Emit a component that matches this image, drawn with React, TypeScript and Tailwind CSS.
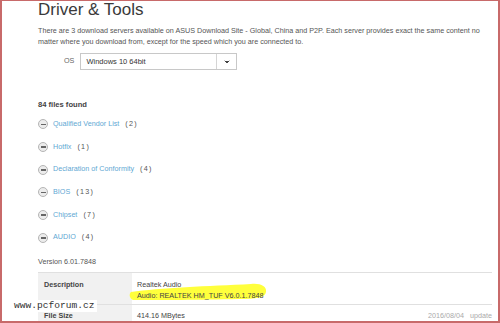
import { ChevronDown } from 'lucide-react';

const categories = [
  { name: 'Qualified Vendor List', count: 2 },
  { name: 'Hotfix', count: 1 },
  { name: 'Declaration of Conformity', count: 4 },
  { name: 'BIOS', count: 13 },
  { name: 'Chipset', count: 7 },
  { name: 'AUDIO', count: 4 },
];

function MinusCircle() {
  return (
    <span className="flex h-[10px] w-[10px] shrink-0 items-center justify-center rounded-full border border-[#b5b5b5] bg-[#ececec]">
      <span className="h-[1.5px] w-[5px] bg-[#666]" />
    </span>
  );
}

export default function App() {
  return (
    <div
      className="relative h-[323px] w-[500px] overflow-hidden border-t border-l-2 border-r-2 border-b-2 border-[#c86a6a] bg-white text-[#555]"
      style={{ fontFamily: '"Liberation Sans", Arial, sans-serif' }}
    >
      <div className="pl-[36px] pr-[6px]">
        {/* Heading */}
        <h1 className="mt-[-2px] text-[17px] leading-[22px] text-[#3a3a3a]">Driver &amp; Tools</h1>
        <p className="mt-[4px] text-[7.2px] leading-[11px] text-[#555]">
          There are 3 download servers available on ASUS Download Site - Global, China and P2P. Each server provides exact the same content no matter where you download from, except for the speed which you are connected to.
        </p>

        {/* OS select */}
        <div className="mt-[6px] flex items-center gap-[6px] pl-[26px]">
          <span className="text-[7.2px] text-[#666]">OS</span>
          <div className="flex h-[17px] w-[157px] items-center border border-[#c8c8c8] bg-white">
            <span className="flex-1 pl-[5px] text-[7.5px] text-[#333]">Windows 10 64bit</span>
            <span className="flex h-full w-[20px] items-center justify-center border-l border-[#d5d5d5]">
              <ChevronDown className="h-[8px] w-[8px] fill-[#444] text-[#444]" strokeWidth={3} />
            </span>
          </div>
        </div>

        {/* Files */}
        <div className="mt-[29px] text-[7.6px] font-bold text-[#444]">84 files found</div>
        <ul className="mt-[9px] flex flex-col gap-[12.7px]">
          {categories.map((c) => (
            <li key={c.name} className="flex h-[10px] items-center gap-[5px] text-[7.2px]">
              <MinusCircle />
              <span className="text-[#5fa8d3]">{c.name}</span>
              <span className="ml-[1px] tracking-[1.3px] text-[#555]">({c.count})</span>
            </li>
          ))}
        </ul>

        <div className="mt-[14px] text-[7.2px] text-[#555]">Version 6.01.7848</div>

        {/* Details table */}
        <div className="mt-[4px] border-t border-[#e0e0e0] text-[7.2px] leading-[11px]">
          <div className="flex h-[32px] border-b border-[#e0e0e0]">
            <div className="w-[94px] shrink-0 bg-[#f1f1f1] pl-[6px] pt-[6px] font-bold text-[#444]">Description</div>
            <div className="relative flex-1 pl-[5px] pt-[6px] text-[#444]">
              <svg className="absolute left-[-3px] top-[8px]" width="140" height="22" viewBox="0 0 140 22">
                <path
                  d="M2 11 C 30 7, 80 5, 122 3 C 131 2, 138 5, 137 11 C 136 17, 127 18, 110 18 C 70 19, 30 19, 4 19 C 0 17, 0 13, 2 11 Z"
                  fill="#ffff3c"
                />
              </svg>
              <div className="relative">Realtek Audio</div>
              <div className="relative">Audio: REALTEK HM_TUF V6.0.1.7848</div>
            </div>
          </div>
          <div className="flex h-[24px]">
            <div className="w-[94px] shrink-0 bg-[#f1f1f1] pl-[6px] pt-[5px] font-bold text-[#444]">File Size</div>
            <div className="flex flex-1 pl-[5px] pt-[5px] text-[#444]">
              <span className="flex-1">414.16 MBytes</span>
              <span className="text-[#aaa]">2016/08/04 &nbsp; update</span>
            </div>
          </div>
        </div>
      </div>

      {/* Watermark */}
      <div
        className="absolute left-[10px] top-[299px] bg-white px-[2px] text-[9.6px] leading-[12px] text-[#333]"
        style={{ fontFamily: '"Liberation Mono", monospace' }}
      >
        www.pcforum.cz
      </div>
    </div>
  );
}
